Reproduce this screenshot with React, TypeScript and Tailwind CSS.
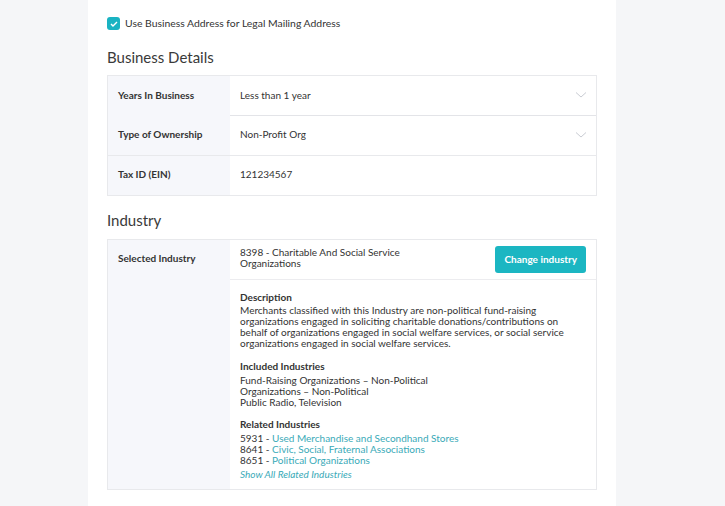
import React from "react";

const Chevron = () => (
  <svg width="12" height="8" viewBox="0 0 12 8" fill="none">
    <path d="M1 1.5 L6 6 L11 1.5" stroke="#c9ccd3" strokeWidth="1" />
  </svg>
);

export default function App() {
  return (
    <div className="flex w-[725px] h-[506px] bg-white overflow-hidden text-[#333]" style={{ fontFamily: "Lato, 'Open Sans', sans-serif" }}>
      <div className="w-[88px] h-full bg-[#f5f6f8]" />
      <div className="w-[528px] h-full bg-white px-[19px] pt-[17px] flex flex-col">
        <div className="flex items-center gap-[5px] h-[13px]">
          <div className="w-[13px] h-[13px] rounded-[3px] bg-[#19b3c2] flex items-center justify-center">
            <svg width="8" height="6" viewBox="0 0 8 6" fill="none">
              <path d="M1 3 L3 5 L7 1" stroke="white" strokeWidth="1.4" />
            </svg>
          </div>
          <span className="text-[10.4px] leading-none">Use Business Address for Legal Mailing Address</span>
        </div>
        <div className="mt-[17px] h-[20px] text-[15px] leading-[20px] text-[#3a3a3a]">Business Details</div>
        <div className="mt-[8px] border border-[#e8e9ec] flex flex-col">
          <div className="flex h-[40px]">
            <div className="w-[122px] bg-[#f6f7fb] pl-[10px] pb-[2px] flex items-center text-[10px] font-bold">Years In Business</div>
            <div className="flex-1 border-b border-[#e3e4e8] flex items-center justify-between pl-[10px] pr-[9px] pb-[1px] text-[10px]">
              <span>Less than 1 year</span>
              <Chevron />
            </div>
          </div>
          <div className="flex h-[40px] border-b border-[#e8e9ec]">
            <div className="w-[122px] bg-[#f6f7fb] pl-[10px] pb-[2px] flex items-center text-[10px] font-bold">Type of Ownership</div>
            <div className="flex-1 flex items-center justify-between pl-[10px] pr-[9px] pb-[2px] text-[10px]">
              <span>Non-Profit Org</span>
              <Chevron />
            </div>
          </div>
          <div className="flex h-[39px]">
            <div className="w-[122px] bg-[#f6f7fb] pl-[10px] pb-[2px] flex items-center text-[10px] font-bold">Tax ID (EIN)</div>
            <div className="flex-1 flex items-center pl-[10px] pb-[2px] text-[10px]">121234567</div>
          </div>
        </div>
        <div className="mt-[14px] h-[20px] text-[15px] leading-[20px] text-[#3a3a3a]">Industry</div>
        <div className="mt-[9px] border border-[#e8e9ec] flex h-[251px]">
          <div className="w-[122px] bg-[#f6f7fb] pl-[10px] pt-[11px] text-[10px] font-bold">Selected Industry</div>
          <div className="flex-1 flex flex-col">
            <div className="h-[40px] border-b border-[#ececef] flex items-center justify-between pl-[10px] pr-[10px]">
              <div className="text-[10px] leading-[11px] w-[200px] mb-[4px]">8398 - Charitable And Social Service Organizations</div>
              <button className="h-[27px] px-[9px] mb-[1px] rounded-[3px] bg-[#1bb6c2] text-white text-[10px] font-bold">Change industry</button>
            </div>
            <div className="pl-[10px] pr-[10px] pt-[12px] text-[10px] leading-[11px]">
              <div className="font-bold">Description</div>
              <div className="mt-[2px]">
                Merchants classified with this Industry are non-political fund-raising organizations engaged in soliciting charitable donations/contributions on behalf of organizations engaged in social welfare services, or social service organizations engaged in social welfare services.
              </div>
              <div className="font-bold mt-[12px]">Included Industries</div>
              <div className="mt-[3px]">Fund-Raising Organizations – Non-Political</div>
              <div>Organizations – Non-Political</div>
              <div>Public Radio, Television</div>
              <div className="font-bold mt-[11px]">Related Industries</div>
              <div className="mt-[3px]">5931 - <span className="text-[#3aaab8]">Used Merchandise and Secondhand Stores</span></div>
              <div>8641 - <span className="text-[#3aaab8]">Civic, Social, Fraternal Associations</span></div>
              <div>8651 - <span className="text-[#3aaab8]">Political Organizations</span></div>
              <div className="mt-[3px] italic text-[#3aaab8]">Show All Related Industries</div>
            </div>
          </div>
        </div>
      </div>
      <div className="flex-1 h-full bg-[#f5f6f8]" />
    </div>
  );
}
